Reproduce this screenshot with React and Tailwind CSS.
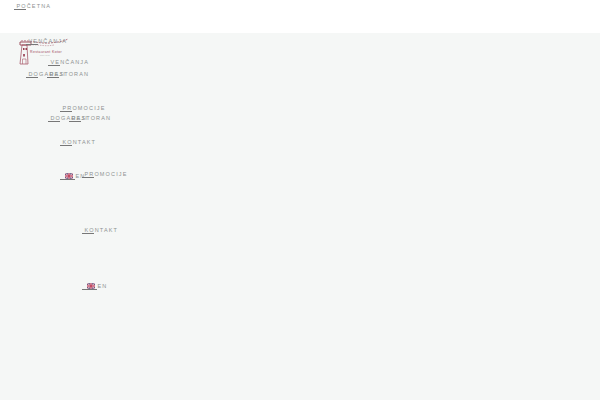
const Item = ({ label, flag, ml = 0, line = 12 }) => (
  <span className="relative flex w-fit items-center h-[8px] text-[5.5px] leading-[8px] tracking-[1.15px] text-[#8e9291] whitespace-nowrap" style={{ marginLeft: ml }}>
    <span className="w-[2.5px] shrink-0" />
    {flag && (
      <svg width="8" height="6" viewBox="0 0 9 6" className="ml-[2.5px] mr-[2.5px] shrink-0">
        <rect width="9" height="6" fill="#3a2f66" />
        <path d="M0 0L9 6M9 0L0 6" stroke="#e8b4c0" strokeWidth="1.2" />
        <path d="M4.5 0V6M0 3H9" stroke="#f5dfe3" strokeWidth="2.2" />
        <path d="M4.5 0V6M0 3H9" stroke="#b01f3f" strokeWidth="1.2" />
      </svg>
    )}
    {label}
    <span className="absolute left-0 bottom-[0px] h-px bg-[#777]" style={{ width: line }} />
  </span>
);

const Logo = () => (
  <div className="flex ml-[18px] mt-[5px] w-[52px] h-[28px] relative">
    <svg width="52" height="28" viewBox="0 0 52 28" className="block" fill="none">
      <path d="M2 26L4 7H9L10 26Z" stroke="#a85c6c" strokeWidth="0.8" />
      <path d="M2 4H13V7H2Z" stroke="#96404f" strokeWidth="0.9" />
      <path d="M3 3C12 2 22 6 32 5C39 4 44 4 50 1" stroke="#b67885" strokeWidth="1" strokeDasharray="2 1" />
      <path d="M12 7C20 6 26 9 36 7" stroke="#c69fa8" strokeWidth="0.8" strokeDasharray="1.5 1" />
      <rect x="5" y="10" width="1.5" height="2" fill="#96404f" />
      <rect x="7.5" y="10" width="1.5" height="2" fill="#96404f" />
      <rect x="5" y="16" width="2" height="2.5" fill="#a85c6c" />
      <path d="M4.5 26V21H8V26" stroke="#a85c6c" strokeWidth="0.6" />
    </svg>
    <span className="absolute left-[12px] top-[12px] text-[3.5px] leading-[4px] tracking-[0.35px] text-[#9b4a5b] whitespace-nowrap">Restaurant Kotor</span>
    <span className="absolute left-[22px] top-[16px] text-[2px] leading-[3px] text-[#b5b5b5] whitespace-nowrap">since 1995</span>
  </div>
);

export default function App() {
  return (
    <div className="w-[600px] h-[400px] overflow-hidden bg-[#f5f7f6] flex flex-col" style={{ fontFamily: '"Liberation Sans", sans-serif' }}>
      <header className="h-[33px] bg-white pt-[2px] shrink-0">
        <Item label="POČETNA" ml={14} />
      </header>
      <main className="grid flex-1">
        <div className="[grid-area:1/1]"><Logo /></div>
        <div className="[grid-area:1/1] flex flex-col pt-[4px]">
          <div className="h-[33px]"><Item label="VENČANJA" ml={26} /></div>
          <div className="h-[34px] flex items-start">
            <div className="w-[47px]"><Item label="DOGAĐAJI" ml={26} /></div>
            <Item label="RESTORAN" />
          </div>
          <div className="h-[34px]"><Item label="PROMOCIJE" ml={60} /></div>
          <div className="h-[34px]"><Item label="KONTAKT" ml={60} /></div>
          <div className="h-[34px]"><Item label="EN" ml={60} flag line={15} /></div>
        </div>
        <div className="[grid-area:1/1] flex flex-col pt-[25px]">
          <div className="h-[56px]"><Item label="VENČANJA" ml={48} /></div>
          <div className="h-[56px] flex items-start">
            <div className="w-[69px]"><Item label="DOGAĐAJI" ml={48} /></div>
            <Item label="RESTORAN" />
          </div>
          <div className="h-[56px]"><Item label="PROMOCIJE" ml={82} /></div>
          <div className="h-[56px]"><Item label="KONTAKT" ml={82} /></div>
          <div className="h-[56px]"><Item label="EN" ml={82} flag line={15} /></div>
        </div>
      </main>
    </div>
  );
}
